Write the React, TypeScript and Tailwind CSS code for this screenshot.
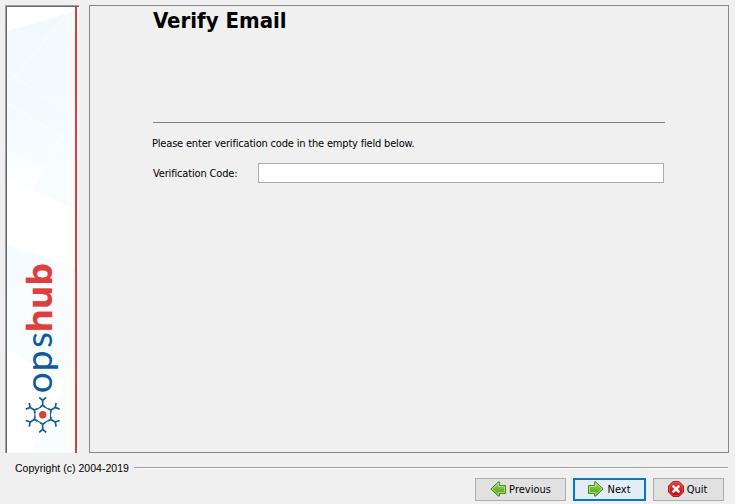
import React from "react";

function ArrowIcon({ flip = false }: { flip?: boolean }) {
  return (
    <svg width="16" height="16" viewBox="0 0 16 16" className={flip ? "-mt-px -scale-x-100" : "-mt-px"}>
      <defs>
        <linearGradient id="green" x1="0" y1="0" x2="0" y2="1">
          <stop offset="0" stopColor="#a3d468" />
          <stop offset=".5" stopColor="#72b835" />
          <stop offset="1" stopColor="#4d9a1c" />
        </linearGradient>
      </defs>
      <path d="M.5 4.500h6V1.200q.2-1 1.200-.2l7.500 7-7.500 7q-1 .8-1.200-.2v-2.300H.5z" fill="url(#green)" stroke="#47852a" strokeLinejoin="round" />
      <path d="M1.500 5.500h6V2.300L13.700 8l-6.200 5.700v-2.200h-6z" fill="none" stroke="#c9eba0" strokeOpacity=".7" />
    </svg>
  );
}

function StopIcon() {
  return (
    <svg width="16" height="16" viewBox="0 0 16 16" className="-mt-px -ml-[2px]">
      <defs>
        <linearGradient id="red" x1="0" y1="0" x2="0" y2="1">
          <stop offset="0" stopColor="#dc4040" />
          <stop offset="1" stopColor="#c00008" />
        </linearGradient>
      </defs>
      <path d="M5 .5h6L15.500 5v6L11 15.500H5L.5 11V5z" fill="url(#red)" stroke="#b01518" strokeLinejoin="round" />
      <path d="M5.300 1.500h5.400l3.800 3.800v5.400l-3.800 3.800H5.300l-3.800-3.800V5.300z" fill="none" stroke="#ed8080" strokeOpacity=".6" strokeWidth=".8" />
      <path d="M5.500 5.500l5 5M10.500 5.500l-5 5" stroke="#f0f0f0" strokeWidth="2.500" strokeLinecap="square" />
    </svg>
  );
}

function Banner() {
  return (
    <svg width="71" height="446" viewBox="7 7 71 446" className="block">
      <defs>
        <linearGradient id="sky" x1="0" y1="0" x2="0" y2="1">
          <stop offset="0" stopColor="#f0f9fd" />
          <stop offset="1" stopColor="#f8fdff" />
        </linearGradient>
      </defs>
      <path d="M7 7h71v446H7z" fill="#fff" />
      <path d="M7 31 70 13l5-3v199L7 179z" fill="url(#sky)" />
      <path d="M7 79 75 7v110L24 84z" fill="#fff" fillOpacity=".15" />
      <path d="M7 71 75 118M7 103l58 36M72 8 7 86M66 130 32 190" stroke="#fff" strokeOpacity=".45" strokeWidth="1.500" />
      <path d="M7 150l37 17-12 24-25-12z" fill="#fff" fillOpacity=".6" />
      <path d="M7 246l68 20v120L7 350z" fill="#f5fbff" />
      <path d="M7 290l68-32v100L30 453H7z" fill="#fff" fillOpacity=".4" />
      <path d="M30 453 75 360v93z" fill="#f9fdfe" />
      <path d="M75 7h2v446h-2z" fill="#dd3e3b" />
      <g transform="translate(51.800 391.500) rotate(-90)">
        <text x="-1.800 20.300 43.500" y="0" fontSize="37" fill="#0d5b9e" fontFamily="Lato, sans-serif">ops</text>
        <text transform="scale(1.050 1)" x="56.300 78.400 100.700" y="0" fontSize="34" fill="#e03e3a" stroke="#e03e3a" strokeWidth=".3" fontFamily="Open Sans, sans-serif" fontWeight="700">hub</text>
      </g>
      <g transform="translate(42.700 414.800)" stroke="#0d5b9e" strokeWidth="1.700" fill="none">
        <path d="M0-9 7.800-4.500v9L0 9l-7.800-4.500v-9z" strokeWidth="1.100" strokeDasharray="5.500 3.500" strokeDashoffset="-1.800" />
        {[0, 60, 120, 180, 240, 300].map((angle) => (
          <g key={angle} transform={`rotate(${angle})`}>
            <path d="M0-8.500v-6M-3.500-17.500 0-14.500l3.500-3M-2.500-7.800 0-9.500l2.500 1.700" />
          </g>
        ))}
        <circle r="3.700" fill="#e03e3a" stroke="none" />
      </g>
    </svg>
  );
}

const label = "font-['DejaVu_Sans_Condensed','DejaVu_Sans',sans-serif] [font-stretch:condensed] whitespace-nowrap text-black";

export default function App() {
  return (
    <div className="flex h-[504px] w-[735px] flex-col overflow-hidden bg-[#f0f0f0]">
      <div className="flex pt-[5px] pl-[5px]">
        <aside className="h-[448px] w-[74px] border-t border-l border-[#a0a0a0] bg-white">
          <div className="h-[447px] border-t border-l border-[#696969]">
            <Banner />
          </div>
        </aside>
        <main className="ml-[10px] h-[448px] w-[640px] border border-[#828790] pl-[63px]">
          <h1 className={`${label} h-[116px] pt-[3px] text-[22px] leading-[24px] font-bold`}>Verify Email</h1>
          <div className="h-px w-[512px] bg-[#808080]" />
          <p className={`${label} mt-[14px] -ml-px h-[14px] text-[11px] leading-[14px] tracking-[-0.185px]`}>
            Please enter verification code in the empty field below.
          </p>
          <div className="mt-[12px] flex h-[20px] items-center">
            <label htmlFor="code" className={`${label} w-[105px] pt-[2px] text-[11px] leading-[14px] tracking-[-0.16px]`}>Verification Code:</label>
            <input id="code" className="h-[20px] w-[406px] border border-[#abadb3] bg-white px-1 text-[11px] outline-none" />
          </div>
        </main>
      </div>
      <div className="mt-[8px] flex h-[14px] items-center pl-[15px]">
        <span className="w-[119px] font-['Liberation_Sans',sans-serif] text-[10.500px] leading-[14px] tracking-[0.03px] whitespace-nowrap text-black">Copyright (c) 2004-2019</span>
        <div className="h-[2px] w-[594px] border-t border-[#a0a0a0] bg-white" />
      </div>
      <footer className="mt-[3px] flex gap-[7px] pl-[475px]">
        <button className={`${label} flex h-[23px] w-[91px] items-center justify-center gap-[3px] border border-[#adadad] bg-[#e1e1e1] text-[11px]`}>
          <ArrowIcon flip /><span className="pt-[2px]">Previous</span>
        </button>
        <button className={`${label} flex h-[23px] w-[73px] items-center justify-center gap-[3px] border-2 border-[#0078d7] bg-[#e4ecf5] text-[11px]`}>
          <ArrowIcon /><span className="pt-[2px]">Next</span>
        </button>
        <button className={`${label} flex h-[23px] w-[71px] items-center justify-center gap-[3px] border border-[#adadad] bg-[#e1e1e1] text-[11px]`}>
          <StopIcon /><span className="pt-[2px]">Quit</span>
        </button>
      </footer>
    </div>
  );
}
